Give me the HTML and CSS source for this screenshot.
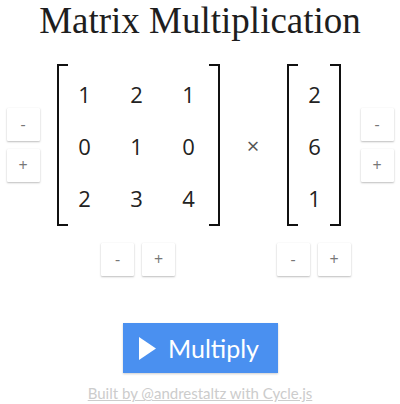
FILE: index.html
```html
<!DOCTYPE html>
<html>
<head>
<meta charset="utf-8">
<link rel="stylesheet" href="styles.css">
</head>
<body>
<div class="page">
  <h1 class="title">Matrix Multiplication</h1>
  <div class="board">
    <div class="side left">
      <button class="btn">-</button>
      <button class="btn">+</button>
    </div>
    <div class="matrix m3">
      <span class="cell">1</span><span class="cell">2</span><span class="cell">1</span>
      <span class="cell">0</span><span class="cell">1</span><span class="cell">0</span>
      <span class="cell">2</span><span class="cell">3</span><span class="cell">4</span>
    </div>
    <div class="times">×</div>
    <div class="matrix m1">
      <span class="cell">2</span>
      <span class="cell">6</span>
      <span class="cell">1</span>
    </div>
    <div class="side right">
      <button class="btn">-</button>
      <button class="btn">+</button>
    </div>
    <div class="under col2">
      <button class="btn">-</button>
      <button class="btn">+</button>
    </div>
    <div class="under col4">
      <button class="btn">-</button>
      <button class="btn">+</button>
    </div>
  </div>
  <button class="multiply">
    <svg class="play" width="17" height="23" viewBox="0 0 17 23"><polygon points="0,0 17,11.5 0,23" fill="#fff"/></svg>
    <span>Multiply</span>
  </button>
  <a class="credit" href="#">Built by @andrestaltz with Cycle.js</a>
</div>
</body>
</html>
```

FILE: styles.css
```css
html, body {
  margin: 0;
  padding: 0;
  background: #fff;
}
.page {
  display: flex;
  flex-direction: column;
  align-items: center;
  width: 400px;
}
.title {
  margin: 0;
  font-family: "Liberation Serif", serif;
  font-weight: normal;
  font-size: 37px;
  line-height: 42px;
  color: #1e1e1e;
  height: 64px;
}
.board {
  display: grid;
  grid-template-columns: 50px 163px 67px 54px 53px;
  grid-template-rows: auto auto;
  row-gap: 17px;
  align-items: center;
}
.side {
  display: flex;
  flex-direction: column;
  gap: 8px;
  grid-row: 1;
}
.side.left { grid-column: 1; justify-self: start; }
.side.right { grid-column: 5; justify-self: end; }
.btn {
  width: 33px;
  height: 33px;
  padding: 0;
  border: none;
  background: #fff;
  box-shadow: 0 1px 2px rgba(0,0,0,0.25), 0 0 1px rgba(0,0,0,0.08);
  color: #777;
  font-family: "Open Sans", sans-serif;
  font-size: 16px;
  line-height: 33px;
  border-radius: 1px;
}
.matrix {
  position: relative;
  grid-row: 1;
  display: grid;
  height: 162px;
  box-sizing: border-box;
  padding: 4px 3px 2px 2px;
  font-family: "Open Sans", sans-serif;
  font-size: 22px;
  color: #222;
}
.matrix::before, .matrix::after {
  content: "";
  position: absolute;
  top: 0;
  bottom: 0;
  width: 9px;
  border: 2px solid #111;
}
.matrix::before { left: 0; border-right: none; }
.matrix::after { right: 0; border-left: none; }
.m3 { grid-column: 2; grid-template-columns: repeat(3, 52px); grid-template-rows: repeat(3, 52px); }
.m1 { grid-column: 4; grid-template-columns: 52px; grid-template-rows: repeat(3, 52px); padding-right: 0; padding-left: 2px; }
.cell {
  display: flex;
  align-items: center;
  justify-content: center;
}
.times {
  grid-row: 1;
  grid-column: 3;
  text-align: center;
  font-family: "Open Sans", sans-serif;
  font-size: 22px;
  color: #555;
}
.under {
  grid-row: 2;
  display: flex;
  gap: 8px;
  justify-self: center;
}
.col2 { grid-column: 2; }
.col4 { grid-column: 4; }
.multiply {
  margin-top: 47px;
  width: 155px;
  height: 50px;
  border: none;
  background: #4a90f0;
  color: #fff;
  display: flex;
  align-items: center;
  justify-content: center;
  gap: 12px;
  font-family: "Lato", sans-serif;
  font-size: 25px;
  padding: 0;
  box-shadow: 0 1px 2px rgba(0,0,0,0.2);
}
.play { display: block; margin-left: -2px; }
.credit {
  margin-top: 11px;
  font-family: "Lato", sans-serif;
  font-size: 15px;
  color: #cccccc;
  text-decoration: underline;
}
```
